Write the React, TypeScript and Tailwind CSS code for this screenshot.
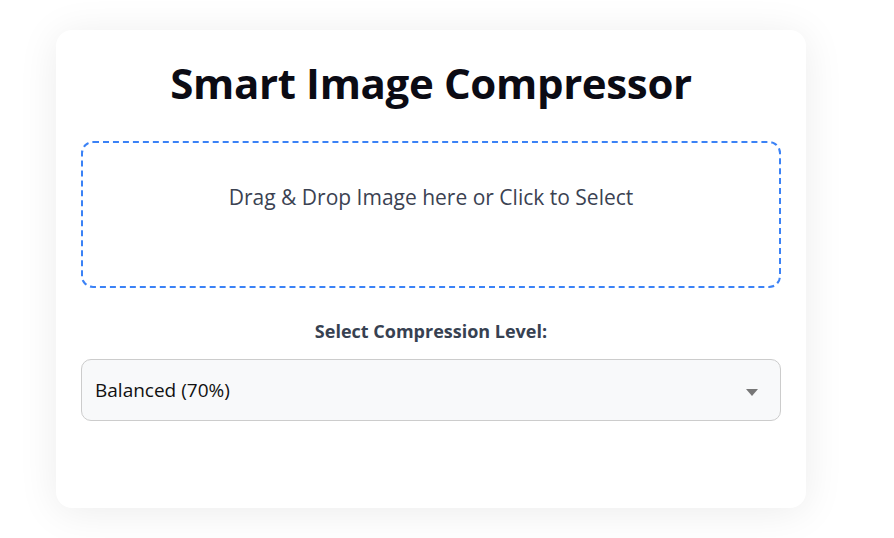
import { useState } from 'react';

// Options for the compression select
const levels = [
  { value: '0.9', label: 'High Quality (90%)' },
  { value: '0.7', label: 'Balanced (70%)' },
  { value: '0.5', label: 'Small Size (50%)' },
];

export default function App() {
  const [level, setLevel] = useState('0.7');

  return (
    <div className="min-h-screen bg-white pt-[30px] pl-[56px] font-['Open_Sans',sans-serif]">
      <div className="w-[750px] h-[478px] rounded-2xl bg-white px-[25px] pt-[28px] shadow-[0_4px_40px_rgba(0,0,0,0.08)]">
        {/* Title */}
        <h1 className="text-center text-[42px] leading-[50px] font-bold text-[#0b0b14] tracking-[-0.35px]">
          Smart Image Compressor
        </h1>

        {/* Drop zone */}
        <div className="mt-[33px] h-[147px] rounded-xl border-2 border-dashed border-[#3b82f6] pt-[40px] text-center cursor-pointer">
          <p className="text-[21px] leading-[29px] text-[#3b4252]">
            Drag &amp; Drop Image here or Click to Select
          </p>
        </div>

        {/* Compression level */}
        <label className="mt-[31px] block text-center text-[18px] leading-[24px] font-bold text-[#374151]">
          Select Compression Level:
        </label>
        <div className="relative mt-[16px]">
          <select
            value={level}
            onChange={(e) => setLevel(e.target.value)}
            className="w-full h-[62px] appearance-none rounded-[10px] border border-[#cccccc] bg-[#f8f9fa] pl-[13px] text-[19px] text-[#111] outline-none"
          >
            {levels.map((l) => (
              <option key={l.value} value={l.value}>
                {l.label}
              </option>
            ))}
          </select>
          <svg
            className="pointer-events-none absolute right-[23px] top-[30px]"
            width="12"
            height="7"
            viewBox="0 0 12 7"
          >
            <path d="M0 0h12L6 7z" fill="#777" />
          </svg>
        </div>
      </div>
    </div>
  );
}
